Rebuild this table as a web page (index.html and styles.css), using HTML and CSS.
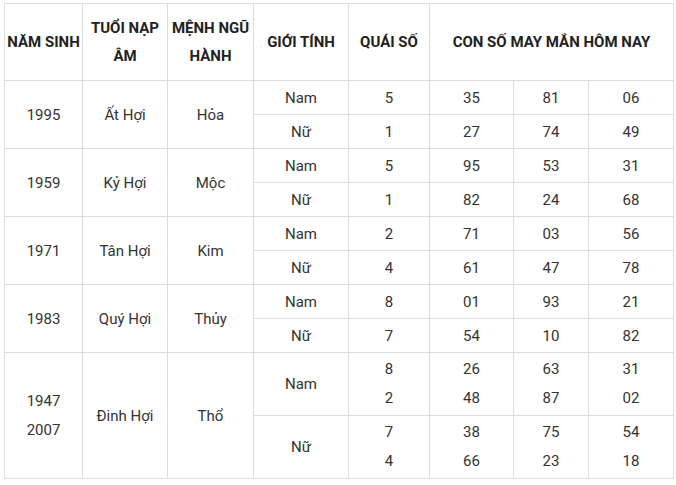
FILE: index.html
```html
<!DOCTYPE html>
<html lang="vi">
<head>
<meta charset="utf-8">
<link rel="stylesheet" href="styles.css">
</head>
<body>
<div class="wrap">
<table class="lucky">
<colgroup>
<col class="c1"><col class="c2"><col class="c3"><col class="c4"><col class="c5"><col class="c6"><col class="c7"><col class="c8">
</colgroup>
<thead>
<tr class="head">
<th>NĂM SINH</th><th>TUỔI NẠP ÂM</th><th>MỆNH NGŨ HÀNH</th><th>GIỚI TÍNH</th><th>QUÁI SỐ</th><th colspan="3">CON SỐ MAY MẮN HÔM NAY</th>
</tr>
</thead>
<tbody>
<tr class="row"><td rowspan="2">1995</td><td rowspan="2">Ất Hợi</td><td rowspan="2">Hỏa</td><td>Nam</td><td>5</td><td>35</td><td>81</td><td>06</td></tr>
<tr class="row"><td>Nữ</td><td>1</td><td>27</td><td>74</td><td>49</td></tr>
<tr class="row"><td rowspan="2">1959</td><td rowspan="2">Kỷ Hợi</td><td rowspan="2">Mộc</td><td>Nam</td><td>5</td><td>95</td><td>53</td><td>31</td></tr>
<tr class="row"><td>Nữ</td><td>1</td><td>82</td><td>24</td><td>68</td></tr>
<tr class="row"><td rowspan="2">1971</td><td rowspan="2">Tân Hợi</td><td rowspan="2">Kim</td><td>Nam</td><td>2</td><td>71</td><td>03</td><td>56</td></tr>
<tr class="row"><td>Nữ</td><td>4</td><td>61</td><td>47</td><td>78</td></tr>
<tr class="row"><td rowspan="2">1983</td><td rowspan="2">Quý Hợi</td><td rowspan="2">Thủy</td><td>Nam</td><td>8</td><td>01</td><td>93</td><td>21</td></tr>
<tr class="row"><td>Nữ</td><td>7</td><td>54</td><td>10</td><td>82</td></tr>
<tr class="row2"><td rowspan="2" class="multi">1947<br>2007</td><td rowspan="2">Đinh Hợi</td><td rowspan="2">Thổ</td><td>Nam</td><td class="multi">8<br>2</td><td class="multi">26<br>48</td><td class="multi">63<br>87</td><td class="multi">31<br>02</td></tr>
<tr class="row2"><td>Nữ</td><td class="multi">7<br>4</td><td class="multi">38<br>66</td><td class="multi">75<br>23</td><td class="multi">54<br>18</td></tr>
</tbody>
</table>
</div>
</body>
</html>
```
FILE: styles.css
```css
html, body {
  margin: 0;
  padding: 0;
  background: #fff;
}
.wrap {
  padding: 3px 0 0 4px;
}
.lucky {
  border-collapse: collapse;
  table-layout: fixed;
  width: 669px;
  font-family: Roboto, "Liberation Sans", sans-serif;
  font-size: 15px;
  color: #333;
}
.c1 { width: 78px; }
.c2 { width: 85px; }
.c3 { width: 86px; }
.c4 { width: 95px; }
.c5 { width: 81px; }
.c6 { width: 84px; }
.c7 { width: 75px; }
.c8 { width: 85px; }
.lucky th,
.lucky td {
  border: 1px solid #ddd;
  padding: 0;
  text-align: center;
  vertical-align: middle;
}
.lucky th {
  font-weight: 700;
  color: #222;
  line-height: 28px;
}
.head { height: 77px; }
.row { height: 34px; }
.row2 { height: 63px; }
.lucky td { line-height: 20px; }
.lucky td.multi { line-height: 29px; }
```
